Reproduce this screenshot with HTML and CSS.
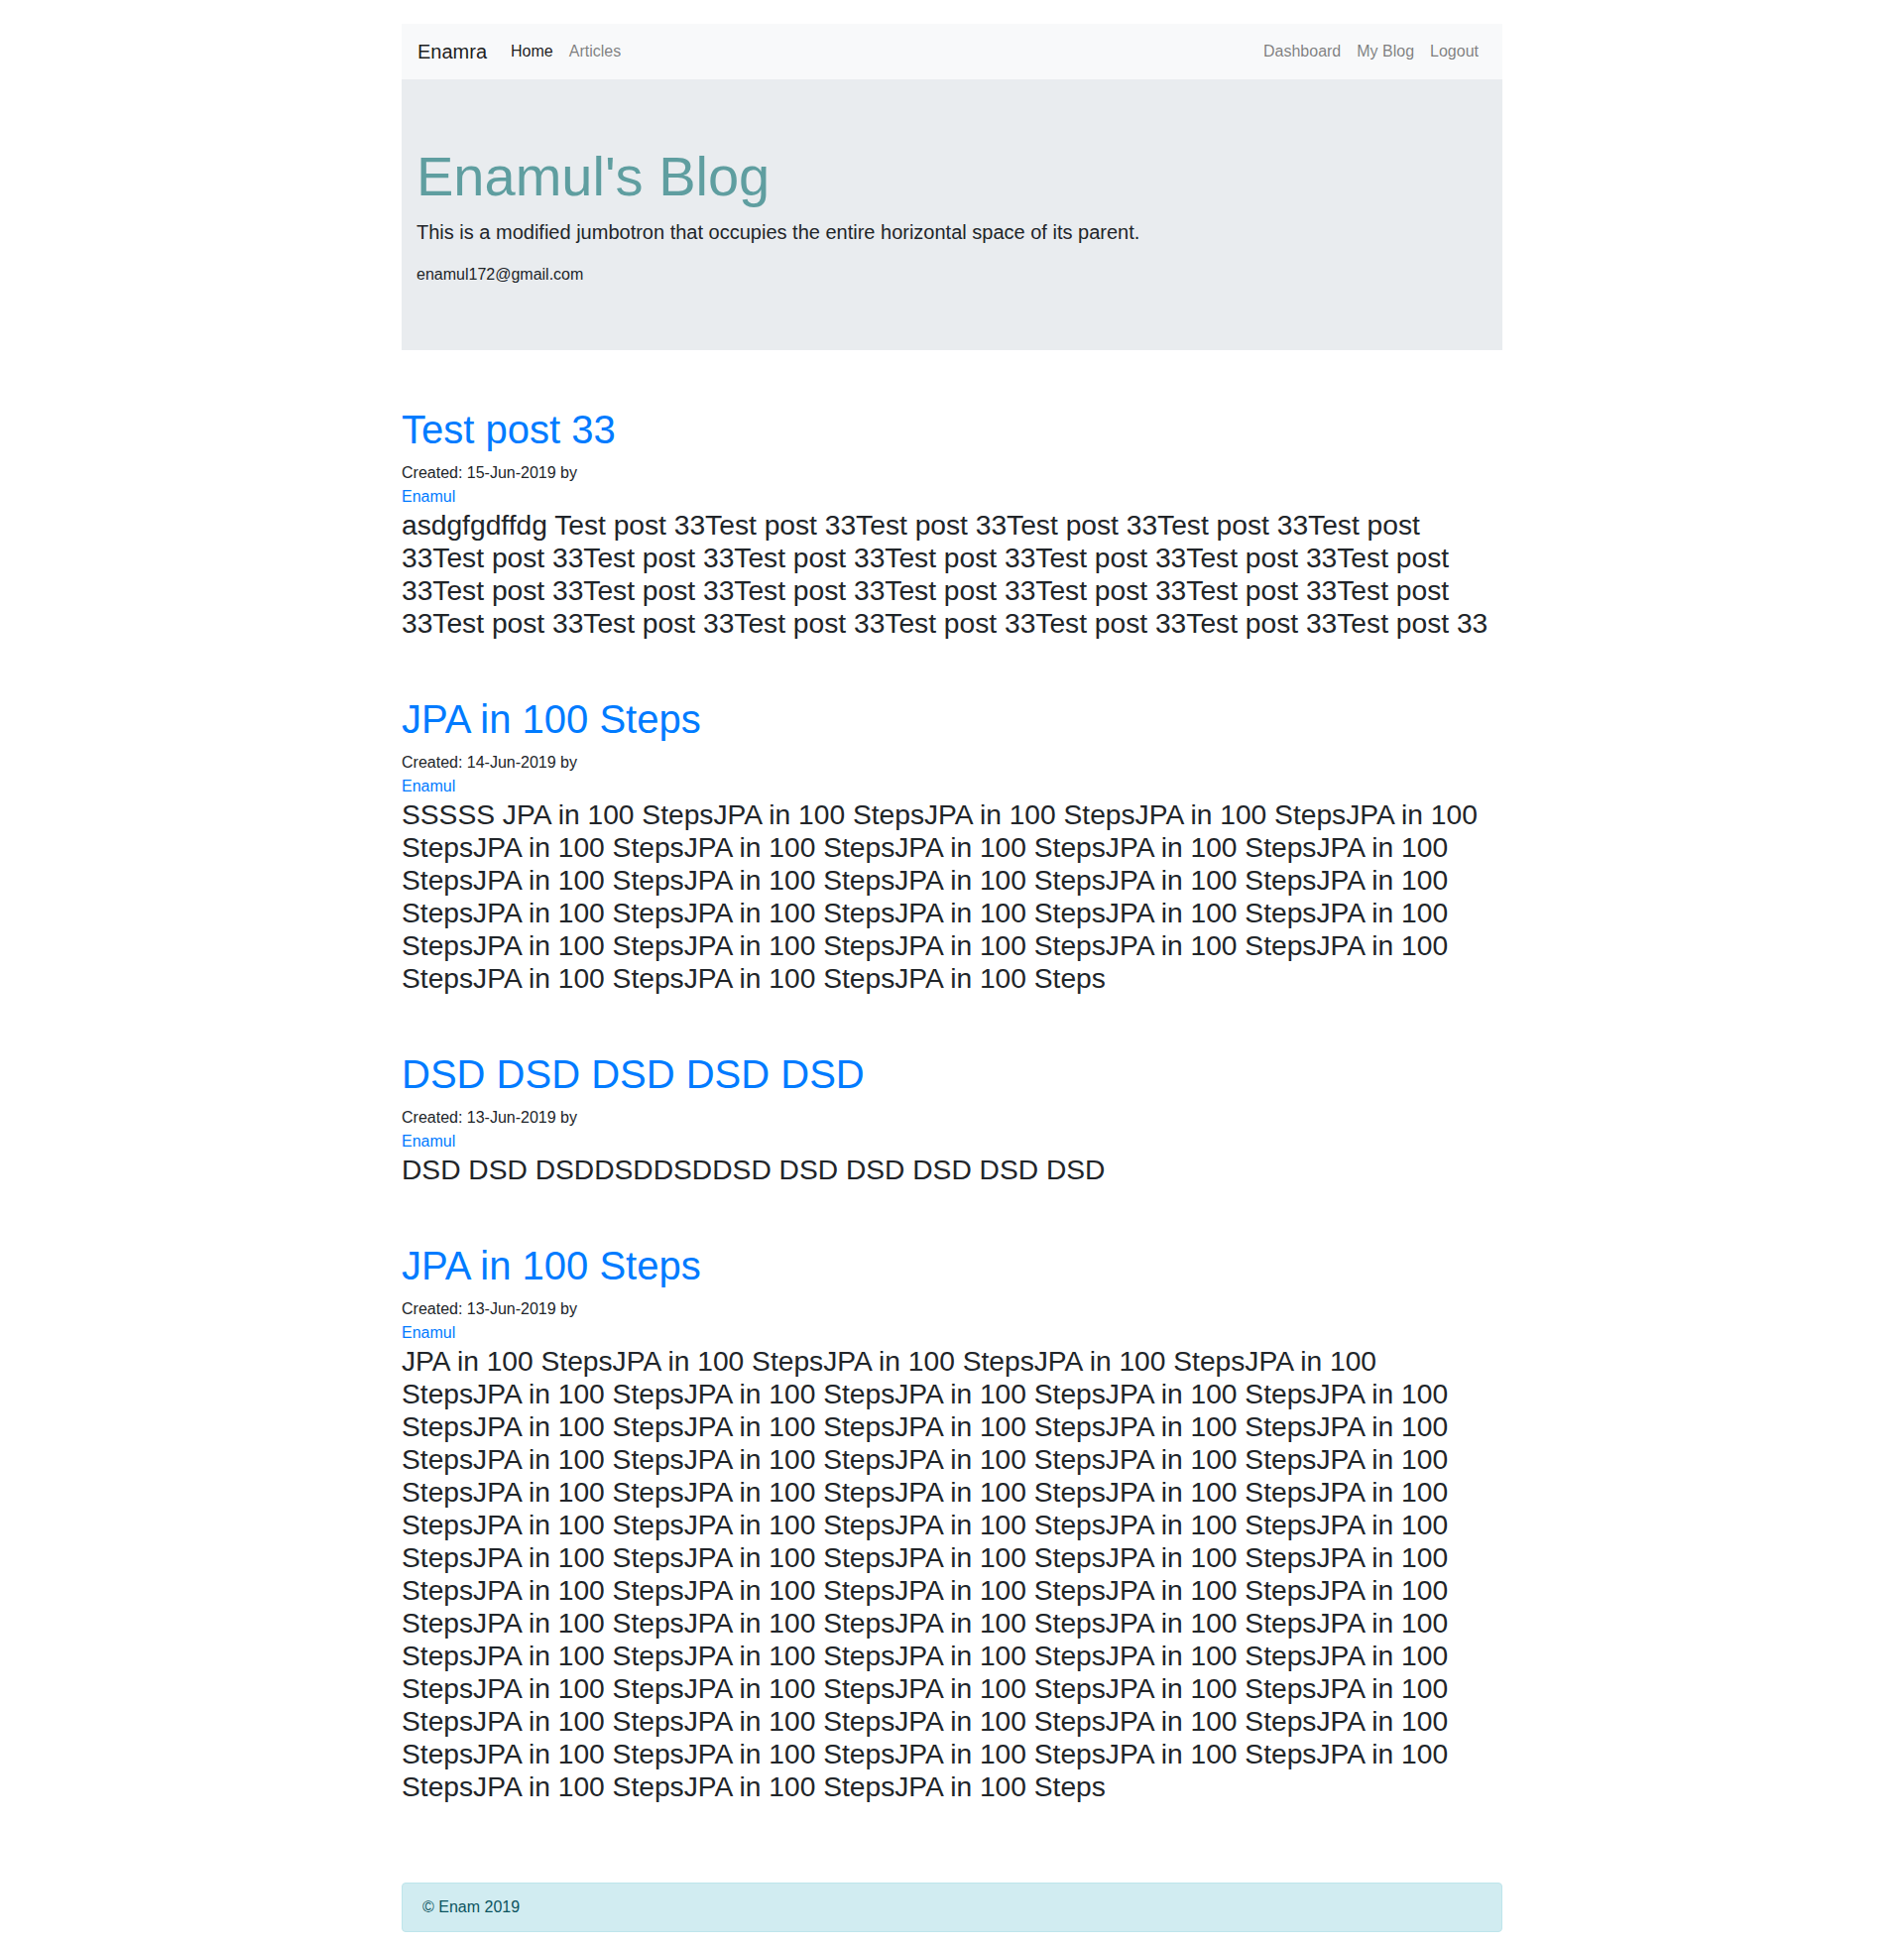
FILE: index.html
```html
<!DOCTYPE html>
<html lang="en">
<head>
<meta charset="utf-8">
<title>Enamul's Blog</title>
<link rel="stylesheet" href="styles.css">
</head>
<body>
<div class="container">
  <nav class="navbar">
    <a class="brand" href="#">Enamra</a>
    <ul class="nav">
      <li><a class="nav-link active" href="#">Home</a></li>
      <li><a class="nav-link" href="#">Articles</a></li>
    </ul>
    <ul class="nav nav-right">
      <li><a class="nav-link" href="#">Dashboard</a></li>
      <li><a class="nav-link" href="#">My Blog</a></li>
      <li><a class="nav-link" href="#">Logout</a></li>
    </ul>
  </nav>

  <header class="jumbotron">
    <div class="jumbo-inner">
      <h1 class="display">Enamul's Blog</h1>
      <p class="lead">This is a modified jumbotron that occupies the entire horizontal space of its parent.</p>
      <div class="email">enamul172@gmail.com</div>
    </div>
  </header>

  <main class="posts">
    <article class="post">
      <h1 class="post-title"><a href="#">Test post 33</a></h1>
      <div class="meta">Created: 15-Jun-2019 by</div>
      <div class="meta"><a href="#">Enamul</a></div>
      <div class="post-body">asdgfgdffdg Test post 33Test post 33Test post 33Test post 33Test post 33Test post 33Test post 33Test post 33Test post 33Test post 33Test post 33Test post 33Test post 33Test post 33Test post 33Test post 33Test post 33Test post 33Test post 33Test post 33Test post 33Test post 33Test post 33Test post 33Test post 33Test post 33Test post 33</div>
    </article>

    <article class="post">
      <h1 class="post-title"><a href="#">JPA in 100 Steps</a></h1>
      <div class="meta">Created: 14-Jun-2019 by</div>
      <div class="meta"><a href="#">Enamul</a></div>
      <div class="post-body">SSSSS JPA in 100 StepsJPA in 100 StepsJPA in 100 StepsJPA in 100 StepsJPA in 100 StepsJPA in 100 StepsJPA in 100 StepsJPA in 100 StepsJPA in 100 StepsJPA in 100 StepsJPA in 100 StepsJPA in 100 StepsJPA in 100 StepsJPA in 100 StepsJPA in 100 StepsJPA in 100 StepsJPA in 100 StepsJPA in 100 StepsJPA in 100 StepsJPA in 100 StepsJPA in 100 StepsJPA in 100 StepsJPA in 100 StepsJPA in 100 StepsJPA in 100 StepsJPA in 100 StepsJPA in 100 StepsJPA in 100 Steps</div>
    </article>

    <article class="post">
      <h1 class="post-title"><a href="#">DSD DSD DSD DSD DSD</a></h1>
      <div class="meta">Created: 13-Jun-2019 by</div>
      <div class="meta"><a href="#">Enamul</a></div>
      <div class="post-body">DSD DSD DSDDSDDSDDSD DSD DSD DSD DSD DSD</div>
    </article>

    <article class="post">
      <h1 class="post-title"><a href="#">JPA in 100 Steps</a></h1>
      <div class="meta">Created: 13-Jun-2019 by</div>
      <div class="meta"><a href="#">Enamul</a></div>
      <div class="post-body">JPA in 100 StepsJPA in 100 StepsJPA in 100 StepsJPA in 100 StepsJPA in 100 StepsJPA in 100 StepsJPA in 100 StepsJPA in 100 StepsJPA in 100 StepsJPA in 100 StepsJPA in 100 StepsJPA in 100 StepsJPA in 100 StepsJPA in 100 StepsJPA in 100 StepsJPA in 100 StepsJPA in 100 StepsJPA in 100 StepsJPA in 100 StepsJPA in 100 StepsJPA in 100 StepsJPA in 100 StepsJPA in 100 StepsJPA in 100 StepsJPA in 100 StepsJPA in 100 StepsJPA in 100 StepsJPA in 100 StepsJPA in 100 StepsJPA in 100 StepsJPA in 100 StepsJPA in 100 StepsJPA in 100 StepsJPA in 100 StepsJPA in 100 StepsJPA in 100 StepsJPA in 100 StepsJPA in 100 StepsJPA in 100 StepsJPA in 100 StepsJPA in 100 StepsJPA in 100 StepsJPA in 100 StepsJPA in 100 StepsJPA in 100 StepsJPA in 100 StepsJPA in 100 StepsJPA in 100 StepsJPA in 100 StepsJPA in 100 StepsJPA in 100 StepsJPA in 100 StepsJPA in 100 StepsJPA in 100 StepsJPA in 100 StepsJPA in 100 StepsJPA in 100 StepsJPA in 100 StepsJPA in 100 StepsJPA in 100 StepsJPA in 100 StepsJPA in 100 StepsJPA in 100 StepsJPA in 100 StepsJPA in 100 StepsJPA in 100 StepsJPA in 100 StepsJPA in 100 Steps</div>
    </article>
  </main>

  <footer class="footer-alert">© Enam 2019</footer>
</div>
</body>
</html>
```
FILE: styles.css
```css
* { box-sizing: border-box; }
html, body { margin: 0; padding: 0; }
body {
  font-family: "Liberation Sans", Arial, sans-serif;
  font-size: 16px;
  line-height: 1.5;
  color: #212529;
  background: #fff;
}
a { text-decoration: none; }

.container {
  max-width: 1140px;
  margin: 0 auto;
  padding: 24px 15px 0;
}

.navbar {
  display: flex;
  align-items: center;
  padding: 8px 16px;
  background: #f8f9fa;
}
.brand {
  font-size: 20px;
  line-height: 30px;
  padding: 5px 0;
  margin-right: 16px;
  color: rgba(0,0,0,.9);
}
.nav {
  display: flex;
  list-style: none;
  margin: 0;
  padding: 0;
}
.nav-right { margin-left: auto; }
.nav-link {
  display: block;
  padding: 8px;
  color: rgba(0,0,0,.5);
}
.nav-link.active { color: rgba(0,0,0,.9); }

.jumbotron {
  background: #e9ecef;
  padding: 64px 0;
  margin-bottom: 32px;
}
.jumbo-inner { padding: 0 15px; }
.display {
  margin: 0 0 8px;
  font-size: 56px;
  font-weight: 300;
  line-height: 1.2;
  color: cadetblue;
}
.lead {
  margin: 0 0 16px;
  font-size: 20px;
  font-weight: 300;
  line-height: 30px;
}
.email { line-height: 24px; }

.posts {
  display: flex;
  flex-direction: column;
  gap: 56px;
  padding: 24px 0 56px;
}
.post-title {
  margin: 0 0 8px;
  font-size: 40px;
  font-weight: 500;
  line-height: 48px;
}
.post-title a, .meta a { color: #007bff; }
.meta { line-height: 24px; }
.post-body {
  font-size: 28.2px;
  line-height: 33px;
}

.footer-alert {
  margin: 24px 0 16px;
  padding: 12px 20px;
  background: #d1ecf1;
  border: 1px solid #bee5eb;
  border-radius: 4px;
  color: #0c5460;
  line-height: 24px;
}
```
